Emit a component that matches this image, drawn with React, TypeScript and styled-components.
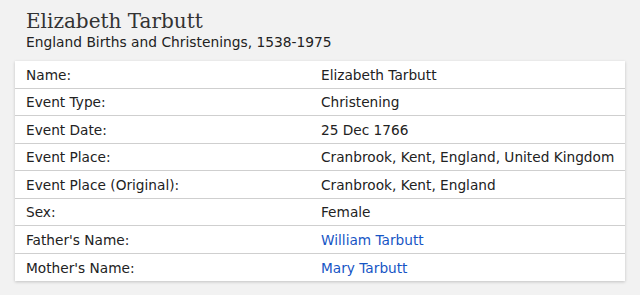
import React from "react";
import styled, { createGlobalStyle } from "styled-components";

const GlobalStyle = createGlobalStyle`
  html, body {
    margin: 0;
    padding: 0;
    background: #f2f2f2;
  }
  body {
    font-family: Verdana, "DejaVu Sans", sans-serif;
    color: #222;
  }
`;

const Page = styled.div`
  width: 640px;
  height: 295px;
  box-sizing: border-box;
  padding: 9px 15px 0 15px;
  background: #f2f2f2;
`;

const Header = styled.header`
  padding-left: 11px;
  margin-bottom: 9px;
`;

const Title = styled.h1`
  margin: 0;
  font-family: "DejaVu Serif", "Liberation Serif", serif;
  font-weight: normal;
  font-size: 20px;
  line-height: 24px;
  color: #333;
`;

const Subtitle = styled.div`
  font-size: 13.8px;
  line-height: 19px;
  color: #222;
`;

const Card = styled.div`
  width: 610px;
  background: #fff;
  box-shadow: 0 1px 3px rgba(0, 0, 0, 0.2);
`;

const Row = styled.div`
  display: grid;
  grid-template-columns: 295px 1fr;
  align-items: center;
  box-sizing: border-box;
  height: 27.5px;
  padding-top: 1px;
  border-bottom: 1px solid #cfcfcf;
  &:last-child {
    border-bottom: none;
  }
`;

const Cell = styled.div<{ $link?: boolean }>`
  padding-left: 11px;
  font-size: 13.7px;
  white-space: nowrap;
  color: ${({ $link }) => ($link ? "#1655c5" : "#222")};
`;

const facts: { label: string; value: string; link?: boolean }[] = [
  { label: "Name:", value: "Elizabeth Tarbutt" },
  { label: "Event Type:", value: "Christening" },
  { label: "Event Date:", value: "25 Dec 1766" },
  { label: "Event Place:", value: "Cranbrook, Kent, England, United Kingdom" },
  { label: "Event Place (Original):", value: "Cranbrook, Kent, England" },
  { label: "Sex:", value: "Female" },
  { label: "Father's Name:", value: "William Tarbutt", link: true },
  { label: "Mother's Name:", value: "Mary Tarbutt", link: true },
];

export default function App() {
  return (
    <>
      <GlobalStyle />
      <Page>
        <Header>
          <Title>Elizabeth Tarbutt</Title>
          <Subtitle>England Births and Christenings, 1538-1975</Subtitle>
        </Header>
        <Card>
          {facts.map((f) => (
            <Row key={f.label}>
              <Cell>{f.label}</Cell>
              <Cell $link={f.link}>{f.value}</Cell>
            </Row>
          ))}
        </Card>
      </Page>
    </>
  );
}
